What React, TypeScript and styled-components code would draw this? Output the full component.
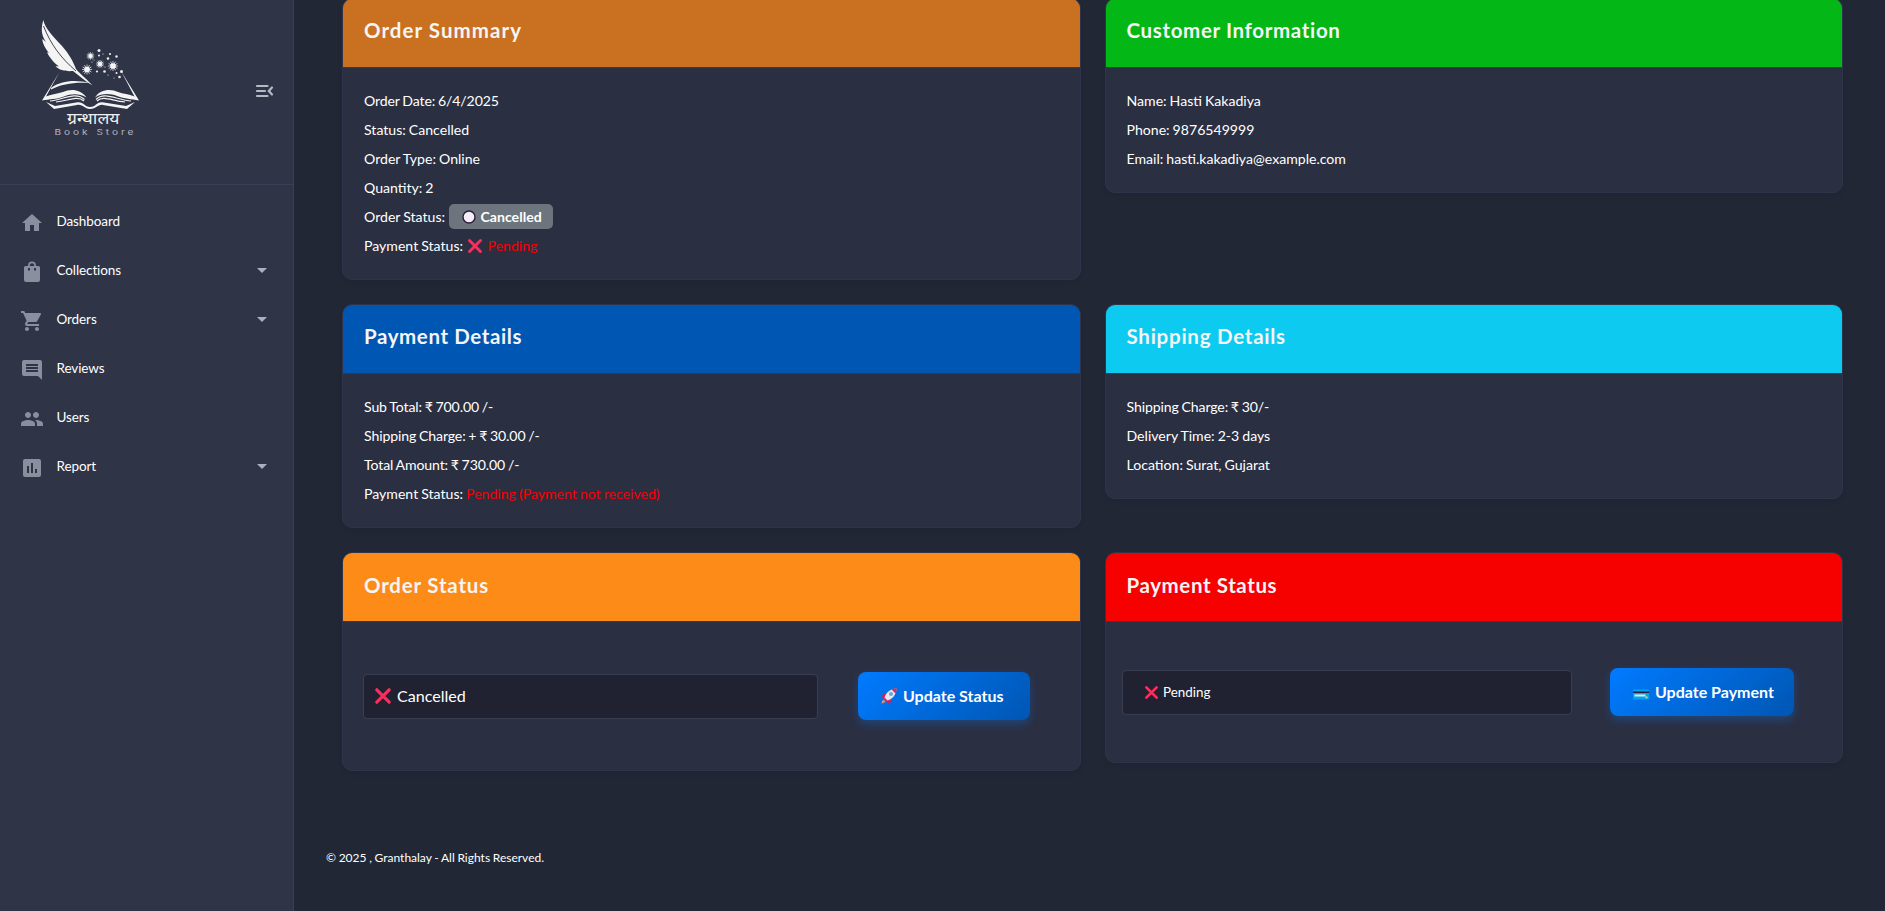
import React from 'react';
import styled, { createGlobalStyle } from 'styled-components';
import { MdHome, MdShoppingCart, MdComment, MdPeople, MdAssessment, MdArrowDropDown } from 'react-icons/md';

const Global = createGlobalStyle`
  * { box-sizing: border-box; }
  body { margin: 0; background: #222736; font-family: Lato, sans-serif; color: #fff; overflow: hidden; }
`;

const Page = styled.div`display: flex; height: 911px; overflow: hidden;`;
const Sidebar = styled.aside`width: 294px; flex: none; background: #2f3447; border-right: 1px solid #3a4054;`;
const Brand = styled.div`
  height: 185px; display: flex; justify-content: space-between; padding: 16px 17px 0 36px;
  border-bottom: 1px solid #3a4054;
`;
const LogoBox = styled.svg`width: 108px; height: 124px; display: block;`;
const Toggle = styled.svg`margin-top: 63px; width: 24px; height: 24px;`;
const Menu = styled.nav`padding-top: 13px;`;
const Item = styled.a`
  height: 49px; display: flex; align-items: center; padding: 0 19px 0 20px; font-size: 13.5px; color: #fff;
`;
const ItemIcon = styled.span`width: 24px; height: 24px; font-size: 24px; line-height: 0; color: #898f9c; margin: 1px 12.5px 0 0;`;
const Label = styled.span`flex: 1; letter-spacing: -0.1px; padding-bottom: 3px;`;
const Caret = styled.span`font-size: 24px; line-height: 0; color: #aab0bc; padding-bottom: 3px;`;

const Main = styled.main`flex: 1; padding: 0 42px 0 32px;`;
const Grid = styled.div`
  display: grid; grid-template-columns: 1fr 1fr; gap: 24px; align-items: start; margin: -2px 0 0 16px;
`;
const Card = styled.section`
  background: #2b2f42; border: 1px solid #2f3548; border-radius: 10px; overflow: hidden;
  box-shadow: 0 3px 4px rgba(20, 24, 34, 0.12);
`;
const Head = styled.header<{ $bg: string; $top: number }>`
  height: 69px; background: ${p => p.$bg}; border-bottom: 1px solid #343a4e; padding: ${p => p.$top}px 21px 0;
`;
const Title = styled.h4<{ $ls: number }>`
  margin: 0; font-size: 20.5px; line-height: 24px; font-weight: 700; color: #f5f5f5; letter-spacing: ${p => p.$ls}px;
`;
const Body = styled.div`padding: 18px 21px 19px;`;
const Line = styled.div<{ $amount?: boolean }>`
  height: 29px; line-height: 29px; font-size: 14.1px; white-space: pre;
  word-spacing: ${p => (p.$amount ? -0.7 : -0.6)}px; letter-spacing: ${p => (p.$amount ? -0.12 : 0)}px;
`;
const Red = styled.span`color: #f50000;`;
const Badge = styled.span`
  display: inline-flex; align-items: center; width: 104px; height: 25px; border-radius: 5px; background: #6c757d;
  padding-left: 12px; gap: 4px; font-weight: 700; line-height: 25px; vertical-align: top; margin: 2px 0 0 0.5px;
`;
const Cross = styled.svg<{ $s: number; $m?: string }>`
  width: ${p => p.$s}px; height: ${p => p.$s}px; margin: ${p => p.$m || 0}; vertical-align: -3px;
`;
const Form = styled.div<{ $h: number; $pad: string }>`
  height: ${p => p.$h}px; display: flex; align-items: flex-start; padding: ${p => p.$pad};
`;
const Select = styled.div<{ $w: number; $size: number; $pl: number }>`
  width: ${p => p.$w}px; height: 45px; border: 1px solid #383e52; border-radius: 4px; background: #202231;
  display: flex; align-items: center; font-size: ${p => p.$size}px; padding: 0 0 1px ${p => p.$pl}px;
  line-height: 20px; margin-top: 2px;
`;
const Button = styled.button<{ $w: number; $ml: number }>`
  width: ${p => p.$w}px; height: 48px; margin-left: ${p => p.$ml}px; border: 0; border-radius: 8px; padding: 0 0 1px 23px;
  display: flex; align-items: center; gap: 6px; font: 700 16px Lato, sans-serif; color: #fff; white-space: nowrap;
  background: linear-gradient(135deg, #007bff, #0056b3); box-shadow: 0 4px 10px rgba(0, 123, 255, 0.3);
`;
const Glyph = styled.svg`width: 16px; height: 16px; flex: none;`;
const Footer = styled.footer`margin-top: 78px; font-size: 12px; line-height: 18px; word-spacing: -0.4px;`;

const X = ({ s, m }: { s: number; m?: string }) => (
  <Cross $s={s} $m={m} viewBox="0 0 16 16">
    <path d="M2.500 2.500 13.500 13.500M13.500 2.500 2.500 13.500" stroke="#fa2d5c" strokeWidth="2.900" strokeLinecap="round" />
  </Cross>
);

const ShoppingBag = () => (
  <svg width="24" height="24" viewBox="0 0 24 24" fill="currentColor">
    <path fillRule="evenodd" d="M8 5.500a4 4 0 0 1 8 0V6h2.500A1.500 1.500 0 0 1 20 7.500V20a2 2 0 0 1-2 2H6a2 2 0 0 1-2-2V7.500A1.500 1.500 0 0 1 5.500 6H8ZM9.700 6h4.600v-.5a2.300 2.300 0 0 0-4.600 0ZM8 8v2.500h2V8ZM14 8v2.500h2V8Z" />
  </svg>
);

const MenuFold = () => (
  <Toggle viewBox="0 0 24 24" fill="none" stroke="#b5bac4" strokeWidth="2.200" strokeLinecap="round">
    <path d="M5 7H15.500M5 12H13M5 17H15.500" />
    <path d="M20 8.500 16.800 12 20 15.500" />
  </Toggle>
);

const Star = ({ x, y, r }: { x: number; y: number; r: number }) => (
  <g transform={`translate(${x} ${y})`} stroke="#f4f4f4" strokeWidth="0.7">
    <circle r={r * 0.55} fill="#fff" stroke="none" />
    {[0, 30, 60, 90, 120, 150].map(a => <path key={a} d={`M${-r} 0H${r}`} transform={`rotate(${a})`} />)}
  </g>
);

const dust = [
  [99, 50.5, 1.5], [99, 55.5, 1], [110, 54, 1.1], [108, 58.5, 1.3], [116.5, 56.5, 1.2], [97, 71.5, 1.1],
  [104.5, 71.5, 1.3], [121.5, 71.5, 1.5], [116.5, 73, 1], [119.5, 77, 1.3], [92, 62, 0.6], [105, 67, 0.6],
  [108, 75, 0.6], [103, 54, 0.6], [94, 60, 0.5], [114, 78, 0.5],
];

const Logo = () => (
  <LogoBox viewBox="36 16 108 124">
    <g fill="#f4f4f4">
      <path d="M43.300 20C45 29 54 37 62 46C69 54 73 61 76 69C80 74 87 79 92.500 85.500C85 81 78 75 73 71C67 71.500 60 71 55.500 66L59 66.500C54 63 49 57 47 52L49 53C44 47 42 41 42.500 39L46 42C41 35 41 28 43.300 20Z" />
      <path d="M51 88C61 80.500 75 79.500 90 83C76 81.800 62 83.500 51 89.500Z" />
      <path d="M59.500 72 46 96.500C52 94 58 93.500 63 92C70 89 80 88.500 86.500 97.500C79 93 71 93.500 64 96.500C56 99.500 50 99 42 100.500Z" />
      <path d="M121 71 139 100.500C131 99 125 99 117 96C110 93.500 102 93 95 97.500C100 89 111 88.500 118 92C123 94 129 94 134.500 96.500Z" />
      <path d="M46 102 55 106 76 102.500C84 101 84 107 90 107C97 107 96 101 104 102.500L126 106 135 102 127 109 103 105C98 104 97 109 90 109C84 109 83 104 77 105L54 109Z" />
    </g>
    <g fill="none" stroke="#f4f4f4" strokeWidth="1.100">
      <path d="M50 101C62 100 76 91 84.500 99.500M56 102C68 101 77 95 84 101M131 101C117 100 104 91 96 99.500M125 102C112 101 103 95 97 101" />
    </g>
    <path d="M43.500 26C51 45 61 58 76 71" fill="none" stroke="#2f3447" strokeWidth="0.900" />
    <Star x={90.5} y={56} r={3.8} /><Star x={87} y={69.5} r={5} /><Star x={100} y={64} r={4} /><Star x={113} y={66} r={5} />
    <g fill="#eee">
      {dust.map(([x, y, r]) => <circle key={`${x}-${y}`} cx={x} cy={y} r={r} />)}
    </g>
    <text x="67" y="124" fontSize="16.500" textLength="52.500" lengthAdjust="spacingAndGlyphs" fill="#eee" fontFamily="Noto Sans, sans-serif">ग्रन्थालय</text>
    <text transform="translate(54.500 134.500) scale(1.350 1)" fontSize="7.500" textLength="58.500" fill="#b4b8c2" fontFamily="Inter, sans-serif">Book Store</text>
  </LogoBox>
);

const items: [string, React.ComponentType, boolean][] = [
  ['Dashboard', MdHome, false], ['Collections', ShoppingBag, true], ['Orders', MdShoppingCart, true],
  ['Reviews', MdComment, false], ['Users', MdPeople, false], ['Report', MdAssessment, true],
];

type PanelProps = { title: string; bg: string; ls?: number; top?: number; children: React.ReactNode };
const Panel = ({ title, bg, ls = 0.6, top = 19, children }: PanelProps) => (
  <Card><Head $bg={bg} $top={top}><Title $ls={ls}>{title}</Title></Head>{children}</Card>
);

export default function App() {
  return (
    <Page>
      <Global />
      <Sidebar>
        <Brand><Logo /><MenuFold /></Brand>
        <Menu>
          {items.map(([name, Icon, drop]) => (
            <Item key={name}><ItemIcon><Icon /></ItemIcon><Label>{name}</Label>{drop && <Caret><MdArrowDropDown /></Caret>}</Item>
          ))}
        </Menu>
      </Sidebar>
      <Main>
        <Grid>
          <Panel title="Order Summary" bg="#c97120" ls={1.05}>
            <Body>
              <Line $amount>Order Date: 6/4/2025</Line>
              <Line>Status: Cancelled</Line>
              <Line>Order Type: Online</Line>
              <Line>Quantity: 2</Line>
              <Line>Order Status: <Badge>
                <Glyph viewBox="0 0 16 16"><circle cx="8" cy="8" r="6" fill="#f3eef8" stroke="#321b41" strokeWidth="1.400" /></Glyph>Cancelled
              </Badge></Line>
              <Line>Payment Status: <X s={16} m="0 5px 0 0.5px" /><Red>Pending</Red></Line>
            </Body>
          </Panel>
          <Panel title="Customer Information" bg="#02b716" ls={0.65}>
            <Body>
              <Line>Name: Hasti Kakadiya</Line>
              <Line>Phone: 9876549999</Line>
              <Line>Email: hasti.kakadiya@example.com</Line>
            </Body>
          </Panel>
          <Panel title="Payment Details" bg="#0056b3">
            <Body>
              <Line $amount>Sub Total: ₹ 700.00 /-</Line>
              <Line $amount>Shipping Charge: + ₹ 30.00 /-</Line>
              <Line $amount>Total Amount: ₹ 730.00 /-</Line>
              <Line>Payment Status: <Red>Pending (Payment not received)</Red></Line>
            </Body>
          </Panel>
          <Panel title="Shipping Details" bg="#0dcaf0" ls={0.75}>
            <Body>
              <Line $amount>Shipping Charge: ₹ 30/-</Line>
              <Line>Delivery Time: 2-3 days</Line>
              <Line>Location: Surat, Gujarat</Line>
            </Body>
          </Panel>
          <Panel title="Order Status" bg="#fd8b17" ls={0.8} top={20}>
            <Form $h={148} $pad="50px 0 0 20px">
              <Select $w={455} $size={16.1} $pl={10}><X s={18} m="0 5px 0 0" />Cancelled</Select>
              <Button $w={172} $ml={40}>
                <Glyph viewBox="0 0 16 16">
                  <path d="M6 5 1.500 6.500 .5 10 4 9ZM11 10 9.500 14.500 6 15.500 7 12Z" fill="#c8265c" />
                  <path d="M3.500 10C4.500 4.500 10 .5 15.500 .5C15.500 6 11.500 11.500 6 12.500Z" fill="#e8e6ee" />
                  <path d="M10.500 1.500Q13 .3 15.700 .3Q15.700 3 14.500 5.500Z" fill="#d92c5b" />
                  <circle cx="10" cy="6" r="2" fill="#64a8dc" /><path d="M3.500 9.500 6.500 12.500 5 13.500 2.500 11Z" fill="#d92c5b" />
                  <path d="M2.500 11.500 4.500 13.500Q3 15.500 .5 15.500Q.5 13 2.500 11.500Z" fill="#ff8456" />
                </Glyph>Update Status
              </Button>
            </Form>
          </Panel>
          <Panel title="Payment Status" bg="#f60000" top={20}>
            <Form $h={140} $pad="46px 0 0 16.5px">
              <Select $w={450} $size={13.4} $pl={21}><X s={15} m="0 4px 0 0" />Pending</Select>
              <Button $w={184} $ml={38}>
                <Glyph viewBox="0 0 16 16">
                  <rect y="5.500" width="16" height="10" rx="1" fill="#00a6ed" /><path d="M0 7.500h16v1.500H0Z" fill="#321b41" />
                  <path d="M1.500 10.500h11v2h-11Z" fill="#e6e6f0" /><path d="M12.500 12.500h2v1.800h-2Z" fill="#f9d94b" />
                </Glyph>Update Payment
              </Button>
            </Form>
          </Panel>
        </Grid>
        <Footer>© 2025 , Granthalay - All Rights Reserved.</Footer>
      </Main>
    </Page>
  );
}
